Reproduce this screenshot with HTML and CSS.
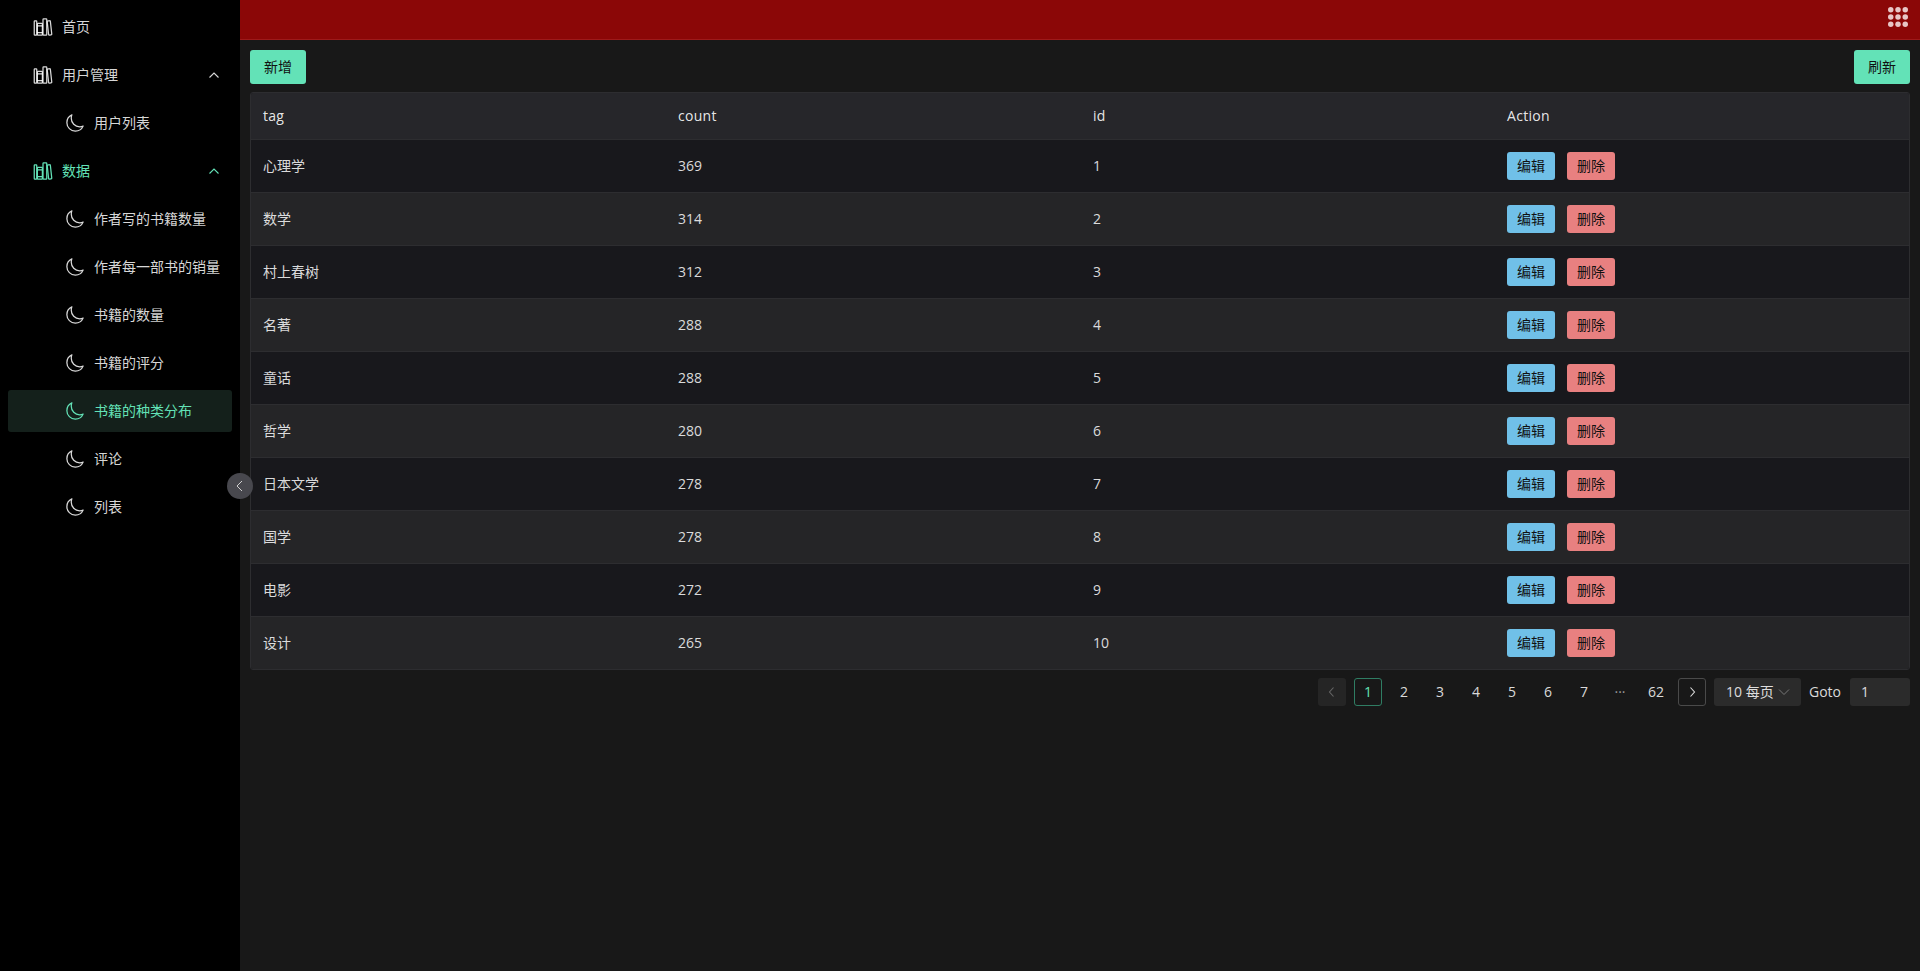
FILE: index.html
```html
<!DOCTYPE html>
<html lang="zh">
<head>
<meta charset="utf-8">
<title>书籍的种类分布</title>
<link rel="stylesheet" href="styles.css">
</head>
<body>
<svg class="defs" width="0" height="0">
  <symbol id="books" viewBox="0 0 512 512"><g fill="none" stroke="currentColor" stroke-width="32" stroke-linejoin="round"><rect x="32" y="96" width="64" height="368" rx="16" ry="16"/><path stroke-linecap="round" d="M112 224h128M112 400h128"/><rect x="112" y="160" width="128" height="304" rx="16" ry="16"/><rect x="256" y="48" width="96" height="416" rx="16" ry="16"/><path d="M422.460 96.110l-40.400 4.250c-11.120 1.170-19.180 11.570-17.930 23.100l34.920 321.590c1.260 11.530 11.370 20 22.490 18.840l40.400-4.250c11.120-1.170 19.180-11.570 17.930-23.100L445 115c-1.310-11.580-11.420-20.060-22.540-18.890z"/></g></symbol>
  <symbol id="moon" viewBox="0 0 512 512"><path fill="none" stroke="currentColor" stroke-width="32" stroke-linecap="round" stroke-linejoin="round" d="M160 136c0-30.620 4.510-61.610 16-88C99.570 81.270 48 159.320 48 248c0 119.290 96.710 216 216 216 88.680 0 166.730-51.570 200-128-26.390 11.490-57.380 16-88 16-119.290 0-216-96.710-216-216z"/></symbol>
</svg>
<div class="app">
  <aside class="sidebar">
    <nav class="menu">
      <a class="item"><svg class="ic"><use href="#books"/></svg><span>首页</span></a>
      <a class="item"><svg class="ic"><use href="#books"/></svg><span>用户管理</span><svg class="arrow" viewBox="0 0 12 12"><path d="M1.500 8.500L6 4l4.500 4.500"/></svg></a>
      <a class="item sub"><svg class="ic"><use href="#moon"/></svg><span>用户列表</span></a>
      <a class="item on"><svg class="ic"><use href="#books"/></svg><span>数据</span><svg class="arrow" viewBox="0 0 12 12"><path d="M1.500 8.500L6 4l4.500 4.500"/></svg></a>
      <a class="item sub"><svg class="ic"><use href="#moon"/></svg><span>作者写的书籍数量</span></a>
      <a class="item sub"><svg class="ic"><use href="#moon"/></svg><span>作者每一部书的销量</span></a>
      <a class="item sub"><svg class="ic"><use href="#moon"/></svg><span>书籍的数量</span></a>
      <a class="item sub"><svg class="ic"><use href="#moon"/></svg><span>书籍的评分</span></a>
      <a class="item sub on active"><svg class="ic"><use href="#moon"/></svg><span>书籍的种类分布</span></a>
      <a class="item sub"><svg class="ic"><use href="#moon"/></svg><span>评论</span></a>
      <a class="item sub"><svg class="ic"><use href="#moon"/></svg><span>列表</span></a>
    </nav>
    <button class="collapse"><svg viewBox="0 0 12 12"><path d="M8 1L3 6l5 5"/></svg></button>
  </aside>
  <div class="main">
    <header class="top">
      <svg class="grid" viewBox="0 0 20 20"><g fill="#e8c6c6"><circle cx="2.750" cy="2.750" r="2.750"/><circle cx="10" cy="2.750" r="2.750"/><circle cx="17.250" cy="2.750" r="2.750"/><circle cx="2.750" cy="10" r="2.750"/><circle cx="10" cy="10" r="2.750"/><circle cx="17.250" cy="10" r="2.750"/><circle cx="2.750" cy="17.250" r="2.750"/><circle cx="10" cy="17.250" r="2.750"/><circle cx="17.250" cy="17.250" r="2.750"/></g></svg>
    </header>
    <main class="content">
      <div class="tools"><button class="btn green">新增</button><button class="btn green">刷新</button></div>
      <table class="table">
        <thead><tr><th>tag</th><th>count</th><th>id</th><th>Action</th></tr></thead>
        <tbody>
          <tr><td>心理学</td><td>369</td><td>1</td><td><button class="tb blue">编辑</button><button class="tb red">删除</button></td></tr>
          <tr><td>数学</td><td>314</td><td>2</td><td><button class="tb blue">编辑</button><button class="tb red">删除</button></td></tr>
          <tr><td>村上春树</td><td>312</td><td>3</td><td><button class="tb blue">编辑</button><button class="tb red">删除</button></td></tr>
          <tr><td>名著</td><td>288</td><td>4</td><td><button class="tb blue">编辑</button><button class="tb red">删除</button></td></tr>
          <tr><td>童话</td><td>288</td><td>5</td><td><button class="tb blue">编辑</button><button class="tb red">删除</button></td></tr>
          <tr><td>哲学</td><td>280</td><td>6</td><td><button class="tb blue">编辑</button><button class="tb red">删除</button></td></tr>
          <tr><td>日本文学</td><td>278</td><td>7</td><td><button class="tb blue">编辑</button><button class="tb red">删除</button></td></tr>
          <tr><td>国学</td><td>278</td><td>8</td><td><button class="tb blue">编辑</button><button class="tb red">删除</button></td></tr>
          <tr><td>电影</td><td>272</td><td>9</td><td><button class="tb blue">编辑</button><button class="tb red">删除</button></td></tr>
          <tr><td>设计</td><td>265</td><td>10</td><td><button class="tb blue">编辑</button><button class="tb red">删除</button></td></tr>
        </tbody>
      </table>
      <div class="pager">
        <span class="pg box dim"><svg viewBox="0 0 12 12"><path d="M7.500 1.500L3.500 6l4 4.500"/></svg></span>
        <span class="pg cur">1</span>
        <span class="pg">2</span><span class="pg">3</span><span class="pg">4</span><span class="pg">5</span><span class="pg">6</span><span class="pg">7</span>
        <span class="pg more">···</span>
        <span class="pg">62</span>
        <span class="pg next"><svg viewBox="0 0 12 12"><path d="M4.500 1.500l4 4.500-4 4.500"/></svg></span>
        <span class="size">10 每页<svg viewBox="0 0 12 12"><path d="M1 3.500l5 5 5-5"/></svg></span>
        <span class="goto">Goto</span>
        <span class="jump">1</span>
      </div>
    </main>
  </div>
</div>
</body>
</html>
```
FILE: styles.css
```css
* { box-sizing: border-box; }
html, body { margin: 0; height: 100%; }
body {
  background: #181818;
  color: rgba(255,255,255,.85);
  font: 14px/20px "Open Sans", "Noto Sans CJK SC", sans-serif;
  overflow: hidden;
}
.defs { position: absolute; }
.app { display: flex; height: 971px; }

.sidebar { position: relative; flex: 0 0 240px; background: #000; }
.menu { display: flex; flex-direction: column; gap: 6px; padding: 6px 8px 0; }
.item {
  display: flex; align-items: center; height: 42px;
  padding-left: 25px; padding-right: 12px;
  border-radius: 3px; color: rgba(255,255,255,.85);
}
.item span { flex: 1; }
.item.sub { padding-left: 57px; }
.item.on { color: #63e2b7; }
.item.sub.on { color: #63e2b7; }
.item.active { background: #14201b; }
.ic { flex: none; width: 20px; height: 20px; margin-right: 9px; }
.arrow { flex: none; width: 12px; height: 12px; fill: none; stroke: currentColor; stroke-width: 1.1; }
.collapse {
  position: absolute; left: 227px; top: 473px; width: 26px; height: 26px;
  padding: 0; border: 0; border-radius: 50%; background: #48484e;
  display: flex; align-items: center; justify-content: center;
}
.collapse svg { width: 12px; height: 12px; fill: none; stroke: #d0d0d0; stroke-width: 1; }

.main { flex: 1; min-width: 0; display: flex; flex-direction: column; }
.top {
  height: 40px; flex: none; background: #8b0707; border-bottom: 1px solid #9e1a1a;
  display: flex; align-items: center; justify-content: flex-end; padding-right: 12px;
}
.grid { width: 20px; height: 20px; margin-top: -5px; }
.content { padding: 10px; }
.tools { display: flex; justify-content: space-between; margin-bottom: 8px; }
.btn, .tb { border: 0; padding: 0; font: inherit; color: #111; cursor: pointer; }
.btn { width: 56px; height: 34px; border-radius: 3px; }
.green { background: #63e2b7; }

.table {
  width: 100%; border-collapse: separate; border-spacing: 0; table-layout: fixed;
  border: 1px solid #2d2d30; border-radius: 3px; overflow: hidden; background: #18181c;
}
.table th {
  height: 47px; padding: 0 12px; text-align: left; font-weight: 400; letter-spacing: .3px;
  color: rgba(255,255,255,.9); background: #26262a; border-bottom: 1px solid #2d2d30;
}
.table th:nth-child(1), .table th:nth-child(2) { width: 415px; }
.table td { height: 53px; padding: 0 12px; border-bottom: 1px solid #2d2d30; }
.table tbody tr:last-child td { height: 52px; border-bottom: 0; }
.table tbody tr:nth-child(even) td { background: #252527; }
.table tbody tr:nth-child(odd) td { background: #18181c; }
.tb { width: 48px; height: 28px; border-radius: 3px; margin-right: 12px; vertical-align: middle; }
.blue { background: #70c0e8; }
.red { background: #e88080; }

.pager { display: flex; justify-content: flex-end; align-items: center; margin-top: 8px; gap: 8px; height: 28px; }
.pg {
  width: 28px; height: 28px; display: flex; align-items: center; justify-content: center;
  border-radius: 3px; border: 1px solid transparent;
}
.pg svg { width: 12px; height: 12px; fill: none; stroke: currentColor; stroke-width: 1.1; }
.dim { background: #252525; color: #666; }
.cur { border-color: #2f7d63; color: #63e2b7; }
.more { color: #999; }
.next { border-color: #4a4a4a; }
.size {
  width: 87px; height: 28px; padding-left: 12px; background: #2b2b2b; border-radius: 3px;
  display: flex; align-items: center; gap: 4px; white-space: nowrap;
}
.size svg { width: 12px; height: 12px; fill: none; stroke: #777; stroke-width: 1; }
.goto { width: 33px; white-space: nowrap; }
.jump { width: 60px; height: 28px; padding-left: 11px; line-height: 28px; background: #2b2b2b; border-radius: 3px; }
```
